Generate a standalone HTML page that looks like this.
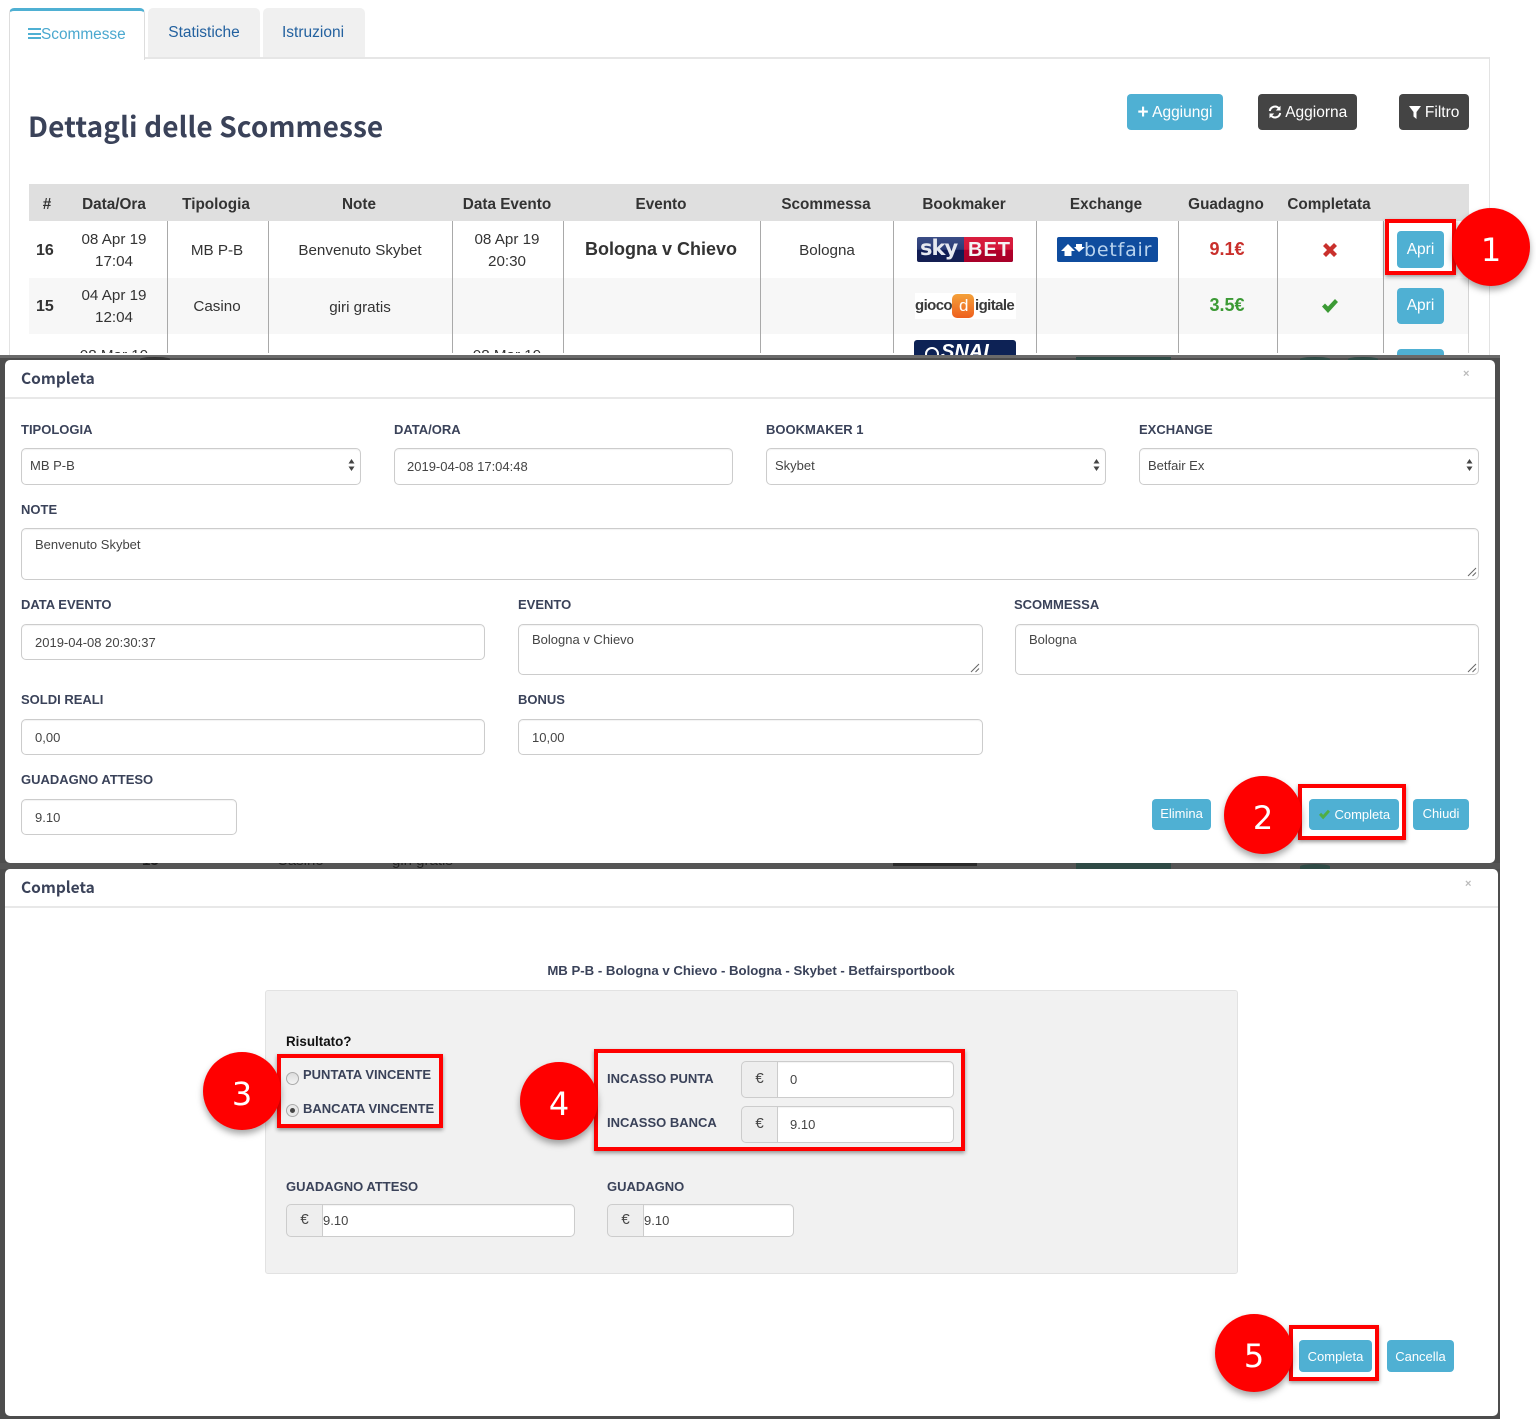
<!DOCTYPE html>
<html lang="it">
<head>
<meta charset="utf-8">
<title>Dettagli delle Scommesse</title>
<style>
html,body{margin:0;padding:0;background:#fff;}
body{position:relative;width:1536px;height:1419px;overflow:hidden;font-family:"Liberation Sans",sans-serif;color:#333;font-size:14px;}
div,span.a{box-sizing:border-box;}
.a{position:absolute;}
.t{position:absolute;white-space:nowrap;line-height:20px;}
.c{transform:translateX(-50%);}
.th{font-weight:bold;font-size:15.3px;color:#333;top:193px;}
.td{font-size:15.2px;color:#333;}
.ln{position:absolute;width:1px;background:#a9a9a9;top:221px;height:132px;}
.btn{position:absolute;background:#4fb0d3;color:#fff;border-radius:4px;text-align:center;white-space:nowrap;font-size:13px;}
.lab{position:absolute;white-space:nowrap;font-weight:bold;font-size:13px;color:#3a4259;line-height:20px;}
.in{position:absolute;background:#fff;border:1px solid #ccc;border-radius:5px;box-shadow:inset 0 1px 1px rgba(0,0,0,.05);font-size:13px;color:#444;white-space:nowrap;}
.hd{position:absolute;font-family:"Noto Sans CJK JP",sans-serif;font-weight:bold;color:#3a4259;white-space:nowrap;}
.red{position:absolute;border:4px solid #f00;box-shadow:0 2px 4px rgba(0,0,0,.4);}
.num{position:absolute;width:78px;height:78px;border-radius:50%;background:#f00;color:#fff;text-align:center;font-family:"DejaVu Sans",sans-serif;font-size:32px;line-height:85px;box-shadow:0 4px 7px rgba(0,0,0,.35);}
.grp{position:absolute;background:#eee;border:1px solid #ccc;border-radius:5px 0 0 5px;text-align:center;font-size:15px;color:#444;}
.arr{position:absolute;width:7px;height:12px;}
.grip{position:absolute;width:10px;height:10px;}
</style>
</head>
<body>

<!-- Tabs -->
<div class="a" style="left:10px;top:57px;width:1480px;height:2px;background:#e6e6e6"></div>
<div class="a" style="left:9px;top:57px;width:1px;height:300px;background:#e3e3e3"></div>
<div class="a" style="left:1489px;top:57px;width:1px;height:300px;background:#e3e3e3"></div>
<div class="a" style="left:9px;top:8px;width:136px;height:52px;background:#fff;border-top:3px solid #4fb0d3;border-right:1px solid #ddd;border-left:1px solid #ddd;border-radius:5px 5px 0 0"></div>
<div class="a" style="left:28px;top:28px;width:13px;height:11px;border-top:2px solid #4fb0d3;border-bottom:2px solid #4fb0d3"></div>
<div class="a" style="left:28px;top:33px;width:13px;height:2px;background:#4fb0d3"></div>
<div class="t" style="left:41px;top:25px;font-size:15.4px;color:#4aa8cf">Scommesse</div>
<div class="a" style="left:148px;top:8px;width:112px;height:49px;background:#f0f0f0;border-radius:5px 5px 0 0"></div>
<div class="t c" style="left:204px;top:23px;font-size:15.5px;color:#23619f">Statistiche</div>
<div class="a" style="left:263px;top:8px;width:102px;height:49px;background:#f0f0f0;border-radius:5px 5px 0 0"></div>
<div class="t c" style="left:313px;top:23px;font-size:15.5px;color:#23619f">Istruzioni</div>

<div class="hd" style="left:28px;top:104px;font-size:28px;line-height:44px;letter-spacing:.1px">Dettagli delle Scommesse</div>

<!-- Top buttons -->
<div class="btn" style="left:1127px;top:94px;width:96px;height:36px;line-height:38px;font-size:15.5px"><b style="font-size:19px;vertical-align:-1px">+</b> Aggiungi</div>
<div class="btn" style="left:1258px;top:94px;width:99px;height:36px;line-height:38px;font-size:15.5px;background:#444"><svg width="14" height="14" viewBox="0 0 14 14" style="vertical-align:-2px"><path d="M1.8 6A5.2 5.2 0 0 1 11 3.5M12.2 8A5.2 5.2 0 0 1 3 10.500" fill="none" stroke="#fff" stroke-width="2"/><path d="M12.500 .8V5.500H7.800ZM1.500 13.200V8.500H6.200Z" fill="#fff"/></svg> Aggiorna</div>
<div class="btn" style="left:1399px;top:94px;width:70px;height:36px;line-height:38px;font-size:15.5px;background:#444"><svg width="12" height="13" viewBox="0 0 12 13" style="vertical-align:-2px"><path d="M0 0H12L7.500 6V13L4.500 10.500V6Z" fill="#fff"/></svg> Filtro</div>

<!-- Table -->
<div class="a" style="left:29px;top:184px;width:1440px;height:37px;background:#dfdfdf"></div>
<div class="a" style="left:29px;top:278px;width:1440px;height:56px;background:#f7f7f7"></div>
<div class="ln" style="left:167px"></div>
<div class="ln" style="left:268px"></div>
<div class="ln" style="left:452px"></div>
<div class="ln" style="left:563px"></div>
<div class="ln" style="left:760px"></div>
<div class="ln" style="left:893px"></div>
<div class="ln" style="left:1036px"></div>
<div class="ln" style="left:1178px"></div>
<div class="ln" style="left:1277px"></div>
<div class="ln" style="left:1383px"></div>
<div class="ln" style="left:1468px;background:#d4d4d4"></div>

<div class="t th c" style="left:47px;top:195px">#</div>
<div class="t th c" style="left:114px;top:195px">Data/Ora</div>
<div class="t th c" style="left:216px;top:195px">Tipologia</div>
<div class="t th c" style="left:359px;top:195px">Note</div>
<div class="t th c" style="left:507px;top:195px">Data Evento</div>
<div class="t th c" style="left:661px;top:195px">Evento</div>
<div class="t th c" style="left:826px;top:195px">Scommessa</div>
<div class="t th c" style="left:964px;top:195px">Bookmaker</div>
<div class="t th c" style="left:1106px;top:195px">Exchange</div>
<div class="t th c" style="left:1226px;top:195px">Guadagno</div>
<div class="t th c" style="left:1329px;top:195px">Completata</div>

<div class="t td" style="left:36px;top:241px;font-weight:bold;font-size:16px">16</div>
<div class="t td c" style="left:114px;top:230px">08 Apr 19</div>
<div class="t td c" style="left:114px;top:252px">17:04</div>
<div class="t td c" style="left:217px;top:241px">MB P-B</div>
<div class="t td c" style="left:360px;top:241px">Benvenuto Skybet</div>
<div class="t td c" style="left:507px;top:230px">08 Apr 19</div>
<div class="t td c" style="left:507px;top:252px">20:30</div>
<div class="t td c" style="left:661px;top:239px;font-weight:bold;font-size:18px">Bologna v Chievo</div>
<div class="t td c" style="left:827px;top:241px">Bologna</div>
<div class="t c" style="left:1227px;top:239px;font-weight:bold;font-size:18px;color:#c9302c">9.1€</div>
<svg class="a" style="left:1322px;top:242px" width="16" height="16" viewBox="0 0 16 16"><path d="M1 4L4 1L8 5L12 1L15 4L11 8L15 12L12 15L8 11L4 15L1 12L5 8Z" fill="#c9302c"/></svg>

<!-- logos row 1 -->
<div class="a" style="left:917px;top:237px;width:96px;height:25px;border-radius:2px;background:linear-gradient(#3b4d86 0%,#2a3b76 50%,#0f1c55 52%,#141f52 100%)"></div>
<div class="a" style="left:964px;top:237px;width:49px;height:25px;border-radius:0 2px 2px 0;background:linear-gradient(#d81e3e 0%,#d4173a 50%,#b2002a 52%,#a80029 100%)"></div>
<div class="t" style="left:920px;top:238px;font-family:'DejaVu Sans',sans-serif;font-weight:bold;font-size:21px;letter-spacing:-1px;color:#e6e8f0">sky</div>
<div class="t" style="left:968px;top:240px;font-weight:bold;font-size:20px;letter-spacing:1px;color:#f4f4f4">BET</div>
<div class="a" style="left:1057px;top:237px;width:101px;height:25px;border-radius:2px;background:#0f4c9e"></div>
<svg class="a" style="left:1061px;top:241px" width="24" height="17" viewBox="0 0 24 17"><path d="M7 3L14 10H10.500V15H3.500V10H0Z M15 3H21V6H24L18 11L13 6H15Z" fill="#fff"/></svg>
<div class="t" style="left:1084px;top:240px;font-family:'DejaVu Sans',sans-serif;font-size:19px;color:#b9d3ee;letter-spacing:.8px">betfair</div>

<!-- row 2 -->
<div class="t" style="left:36px;top:297px;font-weight:bold;font-size:16px">15</div>
<div class="t td c" style="left:114px;top:286px">04 Apr 19</div>
<div class="t td c" style="left:114px;top:308px">12:04</div>
<div class="t td c" style="left:217px;top:297px">Casino</div>
<div class="t td c" style="left:360px;top:298px">giri gratis</div>
<div class="t c" style="left:1227px;top:295px;font-weight:bold;font-size:18px;color:#3c9a35">3.5€</div>
<svg class="a" style="left:1321px;top:298px" width="18" height="16" viewBox="0 0 18 16"><path d="M1 8.500L4 5.500L7 8.500L14 1L17 4L7 15Z" fill="#3c9a35"/></svg>
<div class="a" style="left:915px;top:293px;width:101px;height:26px;background:#fff"></div>
<div class="a" style="left:952px;top:294px;width:22px;height:24px;border-radius:5px;background:linear-gradient(#f4a13a,#ee5f1e)"></div>
<div class="t" style="left:915px;top:296px;font-weight:bold;font-size:15px;letter-spacing:-.6px;color:#3a3a3a">gioco</div>
<div class="t" style="left:959px;top:296px;font-size:17px;color:#fff">d</div>
<div class="t" style="left:975px;top:296px;font-weight:bold;font-size:15px;letter-spacing:-.6px;color:#3a3a3a">igitale</div>

<!-- row 3 peek -->
<div class="t td c" style="left:114px;top:346px;height:7px;overflow:hidden;width:70px;text-align:center">08 Mar 19</div>
<div class="t td c" style="left:507px;top:346px;height:7px;overflow:hidden;width:70px;text-align:center">08 Mar 19</div>
<div class="a" style="left:914px;top:340px;width:102px;height:15px;background:#0d2255;border-radius:3px 3px 0 0;overflow:hidden"><span class="t" style="left:27px;top:2px;color:#fff;font-weight:bold;font-style:italic;font-size:20px">SNAI</span><span class="a" style="left:11px;top:7px;width:14px;height:14px;border:2px solid #fff;border-radius:50%"></span></div>

<!-- Apri buttons -->
<div class="btn" style="left:1397px;top:231px;width:47px;height:37px;line-height:37px;font-size:15.500px">Apri</div>
<div class="btn" style="left:1397px;top:288px;width:47px;height:36px;line-height:35px;font-size:15.500px">Apri</div>
<div class="btn" style="left:1397px;top:349px;width:47px;height:10px"></div>

<!-- Backdrop -->
<div class="a" style="left:0;top:355px;width:1500px;height:1064px;background:#4d4d4d"></div>
<div class="a" style="left:0;top:355px;width:1500px;height:3px;background:#6a6a6a"></div>
<div class="a" style="left:1076px;top:357px;width:95px;height:4px;background:#2f4a45"></div>
<div class="a" style="left:140px;top:357px;width:30px;height:4px;background:#333;border-radius:50% 50% 0 0"></div>
<div class="a" style="left:1300px;top:357px;width:30px;height:4px;background:#2f4a45;border-radius:50% 50% 0 0"></div>
<div class="a" style="left:1348px;top:357px;width:30px;height:4px;background:#2f4a45;border-radius:50% 50% 0 0"></div>

<!-- Modal 1 -->
<div class="a" style="left:5px;top:360px;width:1490px;height:503px;background:#fff;border-radius:5px"></div>
<div class="hd" style="left:21px;top:366px;font-size:15.5px;line-height:24px">Completa</div>
<div class="a" style="left:5px;top:397px;width:1490px;height:2px;background:#e8e8e8"></div>
<div class="t" style="left:1463px;top:364px;font-size:11px;font-weight:bold;color:#bbb">×</div>

<div class="lab" style="left:21px;top:420px">TIPOLOGIA</div>
<div class="in" style="left:21px;top:448px;width:340px;height:37px;line-height:34px;padding-left:8px">MB P-B</div>
<svg class="arr" style="left:348px;top:459px" viewBox="0 0 7 12"><path d="M3.500 0L6.500 4.500H.5ZM.5 7.500H6.500L3.500 12Z" fill="#444"/></svg>
<div class="lab" style="left:394px;top:420px">DATA/ORA</div>
<div class="in" style="left:394px;top:448px;width:339px;height:37px;line-height:36px;padding-left:12px">2019-04-08 17:04:48</div>
<div class="lab" style="left:766px;top:420px">BOOKMAKER 1</div>
<div class="in" style="left:766px;top:448px;width:340px;height:37px;line-height:34px;padding-left:8px">Skybet</div>
<svg class="arr" style="left:1093px;top:459px" viewBox="0 0 7 12"><path d="M3.500 0L6.500 4.500H.5ZM.5 7.500H6.500L3.500 12Z" fill="#444"/></svg>
<div class="lab" style="left:1139px;top:420px">EXCHANGE</div>
<div class="in" style="left:1139px;top:448px;width:340px;height:37px;line-height:34px;padding-left:8px">Betfair Ex</div>
<svg class="arr" style="left:1466px;top:459px" viewBox="0 0 7 12"><path d="M3.500 0L6.500 4.500H.5ZM.5 7.500H6.500L3.500 12Z" fill="#444"/></svg>

<div class="lab" style="left:21px;top:500px">NOTE</div>
<div class="in" style="left:21px;top:528px;width:1458px;height:52px;line-height:16px;padding:8px 0 0 13px">Benvenuto Skybet</div>
<svg class="grip" style="left:1467px;top:567px" viewBox="0 0 10 10"><path d="M1 9L9 1M5.500 9L9 5.500" stroke="#666" stroke-width="1" fill="none"/></svg>

<div class="lab" style="left:21px;top:595px">DATA EVENTO</div>
<div class="in" style="left:21px;top:624px;width:464px;height:36px;line-height:36px;padding-left:13px">2019-04-08 20:30:37</div>
<div class="lab" style="left:518px;top:595px">EVENTO</div>
<div class="in" style="left:518px;top:624px;width:465px;height:51px;line-height:16px;padding:7px 0 0 13px">Bologna v Chievo</div>
<svg class="grip" style="left:970px;top:663px" viewBox="0 0 10 10"><path d="M1 9L9 1M5.500 9L9 5.500" stroke="#666" stroke-width="1" fill="none"/></svg>
<div class="lab" style="left:1014px;top:595px">SCOMMESSA</div>
<div class="in" style="left:1015px;top:624px;width:464px;height:51px;line-height:16px;padding:7px 0 0 13px">Bologna</div>
<svg class="grip" style="left:1467px;top:663px" viewBox="0 0 10 10"><path d="M1 9L9 1M5.500 9L9 5.500" stroke="#666" stroke-width="1" fill="none"/></svg>

<div class="lab" style="left:21px;top:690px">SOLDI REALI</div>
<div class="in" style="left:21px;top:719px;width:464px;height:36px;line-height:36px;padding-left:13px">0,00</div>
<div class="lab" style="left:518px;top:690px">BONUS</div>
<div class="in" style="left:518px;top:719px;width:465px;height:36px;line-height:36px;padding-left:13px">10,00</div>
<div class="lab" style="left:21px;top:770px">GUADAGNO ATTESO</div>
<div class="in" style="left:21px;top:799px;width:216px;height:36px;line-height:36px;padding-left:13px">9.10</div>

<div class="btn" style="left:1152px;top:799px;width:59px;height:31px;line-height:30px">Elimina</div>
<div class="btn" style="left:1309px;top:799px;width:90px;height:31px;line-height:32px"><svg width="13" height="11" viewBox="0 0 18 16" style="vertical-align:-1px"><path d="M1 8.500L4 5.500L7 8.500L14 1L17 4L7 15Z" fill="#4fae45"/></svg> Completa</div>
<div class="btn" style="left:1413px;top:799px;width:56px;height:31px;line-height:30px">Chiudi</div>

<!-- Gap between modals: table seen through the backdrop -->
<div class="a" style="left:0;top:863px;width:1500px;height:6px;background:#555;overflow:hidden">
  <span class="t" style="left:142px;top:-12px;font-size:15px;font-weight:bold;color:#1c1c1c">15</span>
  <span class="t" style="left:277px;top:-12px;font-size:15px;color:#222">Casino</span>
  <span class="t" style="left:392px;top:-12px;font-size:15px;color:#222">giri gratis</span>
  <span class="a" style="left:893px;top:0;width:84px;height:3px;background:#2a2a2a"></span>
  <span class="a" style="left:1076px;top:0;width:95px;height:6px;background:#2f4a45"></span>
  <span class="a" style="left:1300px;top:1px;width:30px;height:5px;background:#2f4a45;border-radius:50% 50% 0 0"></span>
</div>

<!-- Modal 2 -->
<div class="a" style="left:5px;top:869px;width:1493px;height:547px;background:#fff;border-radius:5px"></div>
<div class="hd" style="left:21px;top:875px;font-size:15.5px;line-height:24px">Completa</div>
<div class="a" style="left:5px;top:906px;width:1493px;height:2px;background:#e8e8e8"></div>
<div class="t" style="left:1465px;top:874px;font-size:11px;font-weight:bold;color:#bbb">×</div>

<div class="lab c" style="left:751px;top:961px;font-size:13.2px">MB P-B - Bologna v Chievo - Bologna - Skybet - Betfairsportbook</div>

<div class="a" style="left:265px;top:990px;width:973px;height:284px;background:#f1f1f1;border:1px solid #e2e2e2;border-radius:3px"></div>
<div class="t" style="left:286px;top:1032px;font-weight:bold;font-size:13.400px;color:#111">Risultato?</div>

<div class="a" style="left:286px;top:1072px;width:13px;height:13px;border-radius:50%;background:linear-gradient(#dcdcdc,#f4f4f4);border:1px solid #aaa"></div>
<div class="lab" style="left:303px;top:1065px">PUNTATA VINCENTE</div>
<div class="a" style="left:286px;top:1104px;width:13px;height:13px;border-radius:50%;background:#e8e8e8;border:1px solid #aaa"></div>
<div class="a" style="left:290px;top:1108px;width:5px;height:5px;border-radius:50%;background:#444"></div>
<div class="lab" style="left:303px;top:1099px">BANCATA VINCENTE</div>

<div class="lab" style="left:607px;top:1069px">INCASSO PUNTA</div>
<div class="grp" style="left:741px;top:1061px;width:37px;height:37px;line-height:33px">€</div>
<div class="in" style="left:777px;top:1061px;width:177px;height:37px;line-height:36px;padding-left:12px;border-radius:0 5px 5px 0">0</div>
<div class="lab" style="left:607px;top:1113px">INCASSO BANCA</div>
<div class="grp" style="left:741px;top:1106px;width:37px;height:37px;line-height:33px">€</div>
<div class="in" style="left:777px;top:1106px;width:177px;height:37px;line-height:36px;padding-left:12px;border-radius:0 5px 5px 0">9.10</div>

<div class="lab" style="left:286px;top:1177px">GUADAGNO ATTESO</div>
<div class="grp" style="left:286px;top:1204px;width:37px;height:33px;line-height:30px">€</div>
<div class="in" style="left:322px;top:1204px;width:253px;height:33px;line-height:32px;border-radius:0 5px 5px 0">9.10</div>
<div class="lab" style="left:607px;top:1177px">GUADAGNO</div>
<div class="grp" style="left:607px;top:1204px;width:37px;height:33px;line-height:30px">€</div>
<div class="in" style="left:643px;top:1204px;width:151px;height:33px;line-height:32px;border-radius:0 5px 5px 0">9.10</div>

<div class="btn" style="left:1299px;top:1340px;width:73px;height:32px;line-height:33px">Completa</div>
<div class="btn" style="left:1387px;top:1340px;width:67px;height:32px;line-height:33px">Cancella</div>

<!-- Annotations -->
<div class="red" style="left:1385px;top:219px;width:71px;height:56px"></div>
<div class="num" style="left:1452px;top:208px">1</div>
<div class="red" style="left:1298px;top:784px;width:108px;height:56px"></div>
<div class="num" style="left:1224px;top:776px">2</div>
<div class="red" style="left:277px;top:1054px;width:166px;height:74px"></div>
<div class="num" style="left:203px;top:1052px">3</div>
<div class="red" style="left:594px;top:1049px;width:371px;height:102px"></div>
<div class="num" style="left:520px;top:1062px">4</div>
<div class="red" style="left:1289px;top:1325px;width:90px;height:56px"></div>
<div class="num" style="left:1215px;top:1314px">5</div>

</body>
</html>
